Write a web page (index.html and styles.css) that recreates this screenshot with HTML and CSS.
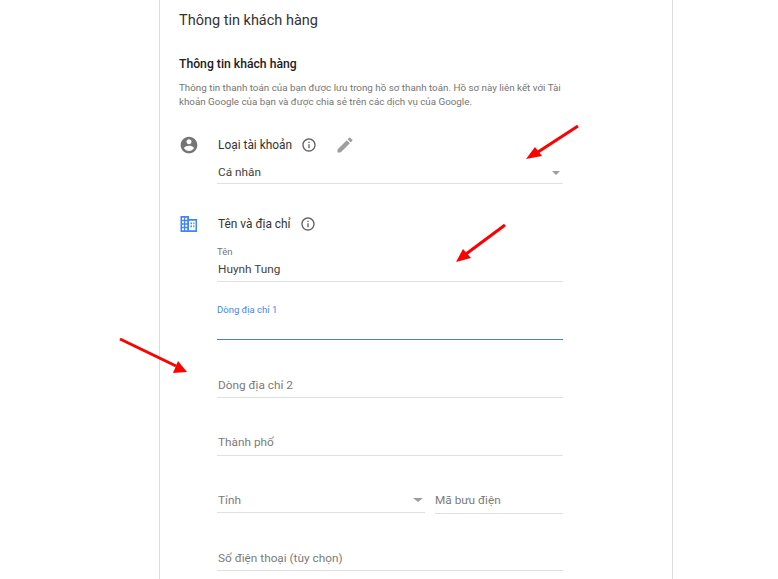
FILE: index.html
```html
<!DOCTYPE html>
<html lang="vi">
<head>
    <meta charset="UTF-8">
    <meta name="viewport" content="width=device-width, initial-scale=1.0">
    <title>Thông tin khách hàng</title>
    <link rel="stylesheet" href="styles.css">
</head>
<body>

<div class="card">
    <div class="card-title">Thông tin khách hàng</div>
    <h2>Thông tin khách hàng</h2>
    <p class="desc">Thông tin thanh toán của bạn được lưu trong hồ sơ thanh toán. Hồ sơ này liên kết với Tài khoản Google của bạn và được chia sẻ trên các dịch vụ của Google.</p>

    <div class="section section-account">
        <svg class="side-icon" viewBox="0 0 24 24"><path fill="#757575" d="M12 2C6.48 2 2 6.48 2 12s4.48 10 10 10 10-4.48 10-10S17.52 2 12 2zm0 3c1.66 0 3 1.34 3 3s-1.34 3-3 3-3-1.34-3-3 1.34-3 3-3zm0 14.2c-2.5 0-4.71-1.28-6-3.22.03-1.99 4-3.08 6-3.08 1.99 0 5.97 1.09 6 3.08-1.29 1.94-3.5 3.22-6 3.22z"/></svg>
        <div class="section-body">
            <div class="section-head">
                <span>Loại tài khoản</span>
                <svg class="info" viewBox="0 0 24 24"><path fill="#616161" d="M11 7h2v2h-2zm0 4h2v6h-2zm1-9C6.48 2 2 6.48 2 12s4.48 10 10 10 10-4.48 10-10S17.52 2 12 2zm0 18c-4.41 0-8-3.59-8-8s3.59-8 8-8 8 3.59 8 8-3.59 8-8 8z"/></svg>
                <svg class="edit" viewBox="0 0 24 24"><path fill="#9e9e9e" d="M3 17.25V21h3.75L17.81 9.94l-3.75-3.75L3 17.25zM20.71 7.04a1 1 0 0 0 0-1.41l-2.34-2.34a1 1 0 0 0-1.41 0l-1.83 1.83 3.75 3.75 1.83-1.83z"/></svg>
            </div>
            <div class="field field-select filled">
                <span>Cá nhân</span>
                <i class="caret"></i>
            </div>
        </div>
    </div>

    <div class="section section-address">
        <svg class="side-icon" viewBox="0 0 20 20">
            <path fill="#4285f4" fill-rule="evenodd" d="M1.5 2h8.5v3h8v13H1.5V2zM3 3.7v2h2v-2H3zm3.2 0v2h2v-2h-2zM3 7.2v2h2v-2H3zm3.2 0v2h2v-2h-2zM3 10.7v2h2v-2H3zm3.2 0v2h2v-2h-2zM3 14.2v2h2v-2H3zm3.2 0v2h2v-2h-2zM10 6.8v9.5h6.5V6.8H10z"/>
            <path fill="#4285f4" d="M11.5 8.5h1.5v1.7h-1.5zM14.2 8.5h1.2v1.7h-1.2zM11.5 11.5h1.5v1.7h-1.5zM14.2 11.5h1.2v1.7h-1.2z"/>
        </svg>
        <div class="section-body">
            <div class="section-head">
                <span>Tên và địa chỉ</span>
                <svg class="info" viewBox="0 0 24 24"><path fill="#616161" d="M11 7h2v2h-2zm0 4h2v6h-2zm1-9C6.48 2 2 6.48 2 12s4.48 10 10 10 10-4.48 10-10S17.52 2 12 2zm0 18c-4.41 0-8-3.59-8-8s3.59-8 8-8 8 3.59 8 8-3.59 8-8 8z"/></svg>
            </div>
            <div class="field field-name filled">
                <label>Tên</label>
                <span>Huynh Tung</span>
            </div>
            <div class="field field-line1">
                <label>Dòng địa chỉ 1</label>
            </div>
            <div class="field field-line2"><span>Dòng địa chỉ 2</span></div>
            <div class="field field-city"><span>Thành phố</span></div>
            <div class="field-row">
                <div class="field field-state">
                    <span>Tỉnh</span>
                    <i class="caret"></i>
                </div>
                <div class="field field-zip"><span>Mã bưu điện</span></div>
            </div>
            <div class="field field-phone"><span>Số điện thoại (tùy chọn)</span></div>
        </div>
    </div>
</div>

<!-- mui ten chu thich ve tren anh -->
<svg class="arrows" viewBox="0 0 778 579">
    <g fill="#f00" stroke="#f00">
        <line x1="578" y1="126" x2="538" y2="152" stroke-width="3"/>
        <polygon points="526,159 535,147 542,156" stroke="none"/>
        <line x1="505" y1="225" x2="466" y2="254" stroke-width="3"/>
        <polygon points="456,262 463,249 471,258" stroke="none"/>
        <line x1="120" y1="339" x2="176" y2="366" stroke-width="3"/>
        <polygon points="187,372 173,373 178,361" stroke="none"/>
    </g>
</svg>

</body>
</html>
```

FILE: styles.css
```css
body {
    margin: 0;
    height: 579px;
    overflow: hidden;
    background-color: #fff;
    font-family: Roboto, Arial, sans-serif;
    color: #212121;
    position: relative;
}
.card {
    box-sizing: border-box;
    width: 514px;
    height: 579px;
    margin-left: 159px;
    padding: 12px 19px 0 19px;
    border-left: 1px solid #dcdcdc;
    border-right: 1px solid #dcdcdc;
    overflow: hidden;
}
.card-title {
    font-size: 14.5px;
    line-height: 18px;
    color: #333;
}
h2 {
    font-size: 12.2px;
    line-height: 16px;
    font-weight: 500;
    margin: 26px 0 0 0;
    color: #212121;
}
.desc {
    font-size: 9.8px;
    line-height: 14px;
    color: #757575;
    margin: 9px 0 0 0;
    width: 385px;
}
.section {
    display: flex;
    width: 384px;
}
.section-account {
    margin-top: 26px;
}
.section-address {
    margin-top: 30px;
}
.side-icon {
    width: 20px;
    height: 20px;
    flex: none;
    margin-right: 18px;
}
.section-body {
    flex: 1;
    min-width: 0;
}
.section-head {
    display: flex;
    align-items: center;
    font-size: 11.9px;
    line-height: 20px;
    color: #333;
    padding-left: 1px;
}
.info {
    width: 16px;
    height: 16px;
    margin-left: 9px;
}
.edit {
    width: 20px;
    height: 20px;
    margin-left: 18px;
}
.field {
    position: relative;
    font-size: 11.8px;
    color: #7b7b7b;
    border-bottom: 1px solid #e0e0e0;
    box-sizing: border-box;
}
.field span {
    display: block;
    line-height: 16px;
    padding-left: 1px;
}
.field.filled span {
    color: #424242;
}
.field label {
    display: block;
    font-size: 9.5px;
    line-height: 12px;
    color: #757575;
}
.caret {
    position: absolute;
    right: 3px;
    top: 7px;
    width: 0;
    height: 0;
    border-left: 4px solid transparent;
    border-right: 4px solid transparent;
    border-top: 4px solid #9e9e9e;
}
.field-select {
    margin-top: 9px;
    height: 20px;
}
.field-name {
    margin-top: 10px;
    height: 38px;
    padding-top: 2px;
}
.field-name span {
    margin-top: 3px;
}
.field-line1 {
    margin-top: 22px;
    height: 36px;
    border-bottom-color: #4a7fd4;
}
.field-line1 label {
    color: #4285f4;
}
.field-line2 {
    margin-top: 37px;
    height: 21px;
}
.field-city {
    margin-top: 36px;
    height: 22px;
}
.field-row {
    display: flex;
    align-items: flex-start;
    gap: 10px;
    margin-top: 36px;
}
.field-state {
    width: 208px;
    height: 21px;
}
.field-state .caret {
    right: 2px;
    top: 6px;
    border-left-width: 5px;
    border-right-width: 5px;
}
.field-zip {
    flex: 1;
    height: 22px;
}
.field-zip span {
    padding-left: 0;
}
.field-phone {
    margin-top: 36px;
    height: 21px;
}
.arrows {
    position: absolute;
    left: 0;
    top: 0;
    width: 778px;
    height: 579px;
    pointer-events: none;
}
```
